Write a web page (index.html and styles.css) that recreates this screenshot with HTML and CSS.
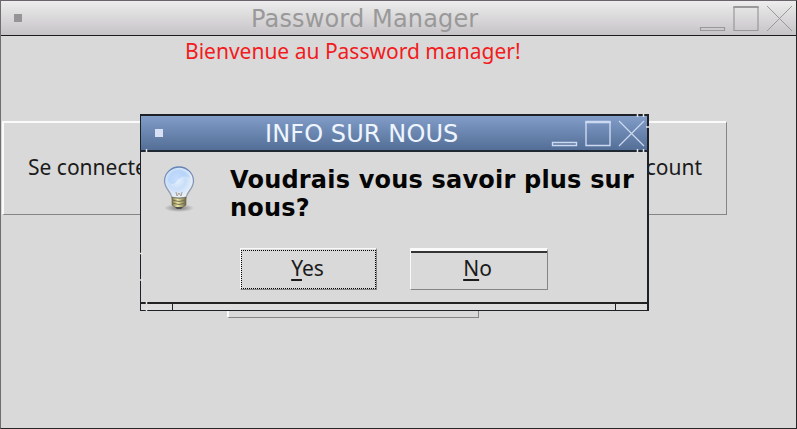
FILE: index.html
```
<!DOCTYPE html>
<html lang="fr">
<head>
<meta charset="utf-8">
<title>Password Manager</title>
<link rel="stylesheet" href="styles.css">
</head>
<body>
<main class="window">
  <header class="titlebar">
    <span class="menu-dot"></span>
    <h1 class="title">Password Manager</h1>
    <svg class="controls" viewBox="0 0 94 28" fill="none" stroke="currentColor">
      <path d="M1.500 22.500h24v3h-24zM35 1.500h24v24h-24zM34 2.500h26" stroke-width="1.200"/><path d="M68 1l25 25M93 1L68 26"/>
    </svg>
  </header>
  <p class="welcome">Bienvenue au Password manager!</p>
  <div class="actions">
    <button class="button login"><span>Se connecter</span></button>
    <button class="button signup"><span>account</span></button>
  </div>
  <button class="button about"></button>
</main>
<section class="dialog">
  <header class="titlebar active">
    <span class="menu-dot"></span>
    <h2 class="title">INFO SUR NOUS</h2>
    <svg class="controls" viewBox="0 0 94 28" fill="none" stroke="currentColor">
      <path d="M1.500 22.500h24v3h-24zM35 1.500h24v24h-24zM34 2.500h26" stroke-width="1.400"/><path d="M68 1l25 25M93 1L68 26" stroke-width="1.200"/>
    </svg>
  </header>
  <div class="message">
    <svg class="bulb" viewBox="0 0 36 48">
      <defs>
        <radialGradient id="glass" cx=".42" cy=".4" r=".62"><stop offset="0" stop-color="#e9f3ff"/><stop offset=".5" stop-color="#c8def8"/><stop offset="1" stop-color="#edf3fa"/></radialGradient>
        <linearGradient id="rim" x2="0" y2="1"><stop stop-color="#6483b6"/><stop offset=".55" stop-color="#8798b8"/><stop offset="1" stop-color="#a0a0a0"/></linearGradient>
        <linearGradient id="brass"><stop stop-color="#77704a"/><stop offset=".4" stop-color="#eeeaa9"/><stop offset="1" stop-color="#696344"/></linearGradient>
        <radialGradient id="shade"><stop stop-color="#777"/><stop offset="1" stop-color="#777" stop-opacity="0"/></radialGradient>
      </defs>
      <ellipse cx="18" cy="43" rx="15" ry="4" fill="url(#shade)"/>
      <path d="M11 33C10 26 3.500 24 3.500 16a14.500 14 0 0 1 29 0C32.500 24 26 26 25 33z" fill="url(#glass)" stroke="url(#rim)" stroke-width="1.300"/>
      <path d="M7 15C8 8 13 5 18 5s10 3 11 8c-5-3-10-1-13 3s-7 4-9-1z" fill="#a9ccfb" opacity=".55"/>
      <path d="M15 27l1 4 2-3 2 3 1-4" fill="none" stroke="#aaa08f"/>
      <path d="M11 32q7 3 14 0v8q-3 3-7 3t-7-3z" fill="url(#brass)" stroke="#716c51" stroke-width=".7"/>
      <path d="M11 35q7 3 14 0M11 38q7 3 14 0" fill="none" stroke="#77704c"/>
      <path d="M14 42h8l-2 2h-4z" fill="#4d4c45"/>
    </svg>
    <p class="question">Voudrais vous savoir plus sur nous?</p>
  </div>
  <div class="choices">
    <button class="choice yes"><span><u>Y</u>es</span></button>
    <button class="choice no"><span><u>N</u>o</span></button>
  </div>
  <footer class="resize"><i></i><i></i><i></i></footer>
  <svg class="nicks" viewBox="0 0 509 197" stroke="#e6e6e6" stroke-width="1.500">
    <path d="M6.500 35v3M497.500 0v3M503.500 0v3M497.500 35v4M503.500 35v4M506 13h3M0 139.500h3M0 166h3M6.500 187v3M6.500 194v3"/>
  </svg>
</section>
</body>
</html>
```
FILE: styles.css
```
* { box-sizing: border-box; }
body { margin: 0; width: 797px; height: 429px; overflow: hidden; background: #d9d9d9; font-family: "Noto Sans", sans-serif; position: relative; }
h1, h2, p { margin: 0; }
button { font: inherit; color: #1b1b1b; background: #d9d9d9; padding: 0; border: 0; }
.window { width: 797px; height: 429px; border: 1px solid #262626; border-top-color: #69656a; border-left-color: #706c70; }
.titlebar { height: 35px; display: flex; align-items: flex-start; border-bottom: 1px solid #1c1c1c; background: linear-gradient(#ededed, #c6c3c6); color: #999; }
.menu-dot { flex: none; width: 8px; height: 8px; margin: 13px 0 0 13px; background: #969496; }
.title { font: 24px/28px "DejaVu Sans", sans-serif; letter-spacing: .15px; white-space: nowrap; margin: 4px 0 0 229px; }
.controls { flex: none; width: 94px; height: 28px; margin: 4px 3px 0 auto; }
.welcome { color: #f21b20; font-size: 21px; line-height: 28px; margin: 1px 0 0 184px; white-space: nowrap; }
.actions { display: flex; margin: 56px 0 0 1px; width: 725px; height: 94px; justify-content: space-between; }
.button { border: 2px solid #858585; border-width: 2px 1px 1px 2px; border-top-color: #fafafa; border-left-color: #fafafa; font-size: 21px; line-height: 28px; }
.button span { display: block; padding-bottom: 4px; }
.login { width: 250px; text-align: left; padding-left: 24px; }
.signup { width: 250px; text-align: right; padding-right: 24px; }
.about { display: block; width: 252px; height: 94px; margin: 9px 0 0 226px; }
.dialog { position: absolute; left: 140px; top: 114px; width: 509px; height: 197px; border: 2px solid #1e2228; border-left-width: 1px; border-bottom-width: 1px; background: #d9d9d9; }
.active { height: 36px; background: linear-gradient(#819dc8, #536f97); color: #ccd9f1; border-bottom: 2px solid #202834; }
.active .menu-dot { margin: 13px 0 0 14px; background: #d7e0f5; }
.active .title { color: #eef5ff; margin: 4px 0 0 102px; letter-spacing: .1px; }
.active .controls { margin: 4px 2px 0 auto; }
.message { display: flex; height: 94px; padding: 13px 0 0 20px; }
.bulb { width: 36px; height: 48px; flex: none; }
.question { width: 415px; margin-left: 33px; padding-top: 1px; font: bold 24px/28px "DejaVu Sans", sans-serif; letter-spacing: .2px; color: #050505; }
.choices { display: flex; gap: 32px; height: 56px; padding: 2px 0 0 99px; }
.choice { height: 42px; width: 138px; font-size: 21px; border: 1px solid #858585; border-top-color: #fafafa; border-left-color: #fafafa; }
.choice span { display: block; }
.choice u { text-underline-offset: 3px; text-decoration-thickness: 1.500px; text-decoration-skip-ink: none; }
.yes { width: 137px; margin-right: 1px; }
.yes span { height: 39px; border: 1px dotted #000; line-height: 34px; padding-right: 2px; }
.no { border-top-width: 3px; }
.no span { border-top: 2px solid #343434; height: 38px; line-height: 30px; padding-right: 3px; }
.resize { height: 8px; display: grid; grid-template-columns: 31px 1fr 31px; gap: 1px; border-top: 2px solid #222; background: #222; }
.resize i { background: #dedede; }
.nicks { position: absolute; left: -1px; top: -2px; width: 509px; height: 197px; }
```
